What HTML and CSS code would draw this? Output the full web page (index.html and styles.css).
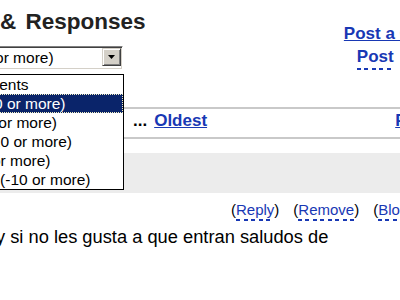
FILE: index.html
```html
<!DOCTYPE html>
<html>
<head>
<meta charset="utf-8">
<link rel="stylesheet" href="styles.css">
</head>
<body>
<div class="page">
  <header class="head">
    <div class="head-left">
      <h1 class="title">&amp; Responses</h1>
      <div class="combo">
        <div class="combo-field">
          <span class="combo-value">Best (10 or more)</span>
          <span class="combo-btn"><svg width="7" height="4" viewBox="0 0 7 4"><polygon points="0,0 7,0 3.5,4" fill="#000"/></svg></span>
        </div>
        <ul class="combo-list">
          <li>All Comments</li>
          <li class="selected">Above (10 or more)</li>
          <li>Above (5 or more)</li>
          <li>Mixed (+10 or more)</li>
          <li>Low (+5 or more)</li>
          <li>Very Low (-10 or more)</li>
        </ul>
      </div>
    </div>
    <div class="head-right">
      <a class="post-main" href="#">Post a Comment</a>
      <a class="post-alt dashed" href="#">Post</a>
    </div>
  </header>
  <nav class="pager">
    <span class="dots">...</span>
    <a class="oldest" href="#">Oldest</a>
    <a class="prev" href="#">Previous</a>
  </nav>
  <div class="comment-head"></div>
  <div class="actions">
    <span>(<a class="dashed" href="#">Reply</a>)</span>
    <span>(<a class="dashed" href="#">Remove</a>)</span>
    <span>(<a class="dashed" href="#">Block</a>)</span>
  </div>
  <p class="comment-text">y si no les gusta a que entran saludos de</p>
</div>
</body>
</html>
```

FILE: styles.css
```css
html, body {
  margin: 0;
  padding: 0;
  overflow: hidden;
  background: #fff;
}

body {
  font-family: "Liberation Sans", Arial, sans-serif;
  color: #000;
}

a {
  color: #1838b4;
}

.page {
  width: 480px;
}

.head {
  display: flex;
  justify-content: space-between;
  align-items: flex-start;
}

.title {
  margin: 0;
  padding-top: 9px;
  font-size: 22.5px;
  line-height: 26px;
  font-weight: bold;
  word-spacing: 3px;
  color: #222;
  white-space: nowrap;
}

.combo {
  position: relative;
  margin-top: 11px;
  margin-left: -70px;
  width: 193px;
}

.combo-field {
  display: flex;
  height: 20px;
  border: 1px solid;
  border-color: #808080 #fff #fff #808080;
  box-shadow: inset 1px 1px #404040, inset -1px -1px #d4d0c8;
  padding: 1px;
  background: #fff;
}

.combo-value {
  flex: 1;
  padding-left: 1px;
  font-size: 15.5px;
  line-height: 20px;
  white-space: nowrap;
  overflow: hidden;
}

.combo-btn {
  width: 17px;
  height: 16px;
  background: #d4d0c8;
  border: 1px solid;
  border-color: #d4d0c8 #404040 #404040 #d4d0c8;
  box-shadow: inset 1px 1px #fff, inset -1px -1px #808080;
  display: flex;
  align-items: center;
  justify-content: center;
}

.combo-btn svg {
  display: block;
}

.combo-list {
  position: absolute;
  top: calc(100% + 4px);
  left: 0;
  right: -1px;
  margin: 0;
  padding: 0;
  list-style: none;
  background: #fff;
  border: 1px solid #000;
  z-index: 5;
}

.combo-list li {
  height: 19px;
  line-height: 19px;
  padding-left: 1px;
  font-size: 15.5px;
  white-space: nowrap;
  overflow: hidden;
}

.combo-list li.selected {
  background: #0a246a;
  color: #fff;
  outline: 1px dotted #f4f0c0;
  outline-offset: -1px;
}

.head-right {
  display: flex;
  flex-direction: column;
  align-items: flex-start;
  padding-top: 24px;
  padding-right: 2px;
  font-size: 17px;
  font-weight: bold;
}

.post-main {
  display: block;
  line-height: 20px;
  white-space: nowrap;
}

.post-alt {
  display: inline-block;
  line-height: 20px;
  margin-top: 3px;
  margin-left: 13px;
  padding-bottom: 3px;
}

.dashed {
  text-decoration: none;
  background-image: repeating-linear-gradient(90deg, #1838b4 0 4px, transparent 4px 7.5px);
  background-size: 100% 2px;
  background-position: left bottom;
  background-repeat: no-repeat;
}

.pager {
  display: flex;
  align-items: baseline;
  margin-top: 37px;
  border-top: 2px solid #c9c9c9;
  border-bottom: 2px solid #c9c9c9;
  padding: 0 13px 4px 133px;
  font-size: 17px;
  font-weight: bold;
  line-height: 24px;
}

.dots {
  color: #000;
}

.oldest {
  margin-left: 7px;
}

.prev {
  margin-left: auto;
}

.comment-head {
  margin-top: 14px;
  height: 40px;
  background: #ececec;
}

.actions {
  display: flex;
  gap: 14px;
  margin-top: 7px;
  padding-left: 231px;
  font-size: 15px;
  line-height: 20px;
  height: 21px;
  white-space: nowrap;
}

.actions a {
  display: inline-block;
  line-height: 20px;
  padding-bottom: 1px;
  vertical-align: top;
}

.comment-text {
  margin: 5px 0 0 -4px;
  font-size: 18.3px;
  line-height: 22px;
  white-space: nowrap;
}
```
